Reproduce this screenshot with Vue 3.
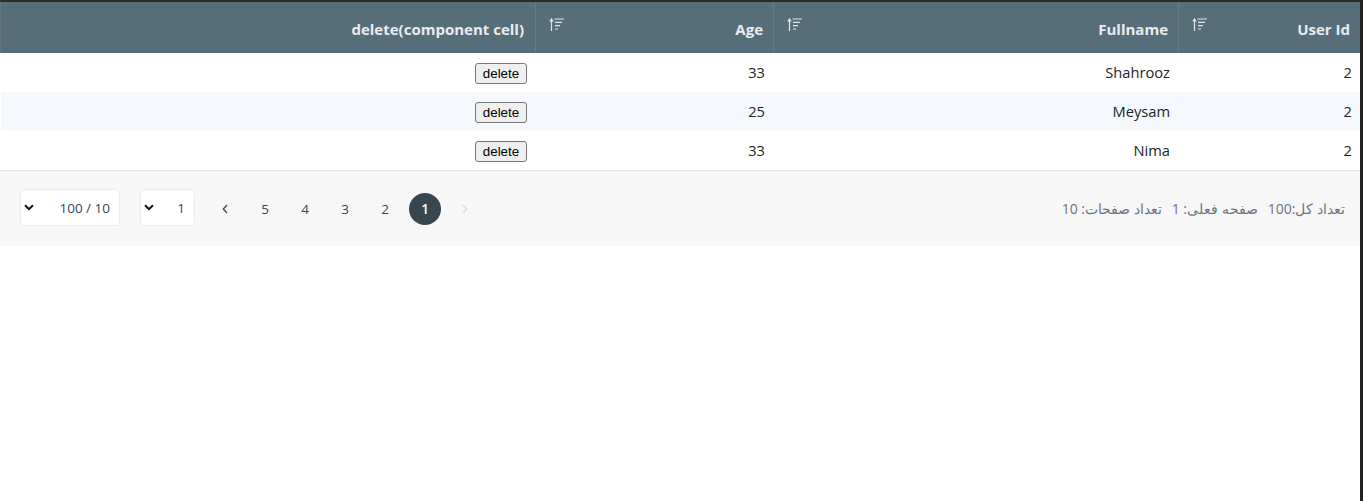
<script setup>
const rows = [
  { id: 2, name: 'Shahrooz', age: 33 },
  { id: 2, name: 'Meysam', age: 25 },
  { id: 2, name: 'Nima', age: 33 },
]
const pages = [5, 4, 3, 2]
</script>

<template>
  <div class="page">
    <div class="grid">
      <div class="head row-cols">
        <div class="th th-del"><span class="label">delete(component cell)</span></div>
        <div class="th th-age">
          <svg class="sort" width="16" height="13" viewBox="0 0 16 13"><path d="M2.500 1.500V13M.8 3.500 2.500 1 4.200 3.500" fill="none" stroke="currentColor" stroke-width="1.200"/><path d="M5.500 1h9.500M6 4.300h7M6 7.700h5M6 11h3" fill="none" stroke="currentColor" stroke-width="1.200"/></svg>
          <span class="label">Age</span>
        </div>
        <div class="th th-name">
          <svg class="sort" width="16" height="13" viewBox="0 0 16 13"><path d="M2.500 1.500V13M.8 3.500 2.500 1 4.200 3.500" fill="none" stroke="currentColor" stroke-width="1.200"/><path d="M5.500 1h9.500M6 4.300h7M6 7.700h5M6 11h3" fill="none" stroke="currentColor" stroke-width="1.200"/></svg>
          <span class="label">Fullname</span>
        </div>
        <div class="th th-id">
          <svg class="sort" width="16" height="13" viewBox="0 0 16 13"><path d="M2.500 1.500V13M.8 3.500 2.500 1 4.200 3.500" fill="none" stroke="currentColor" stroke-width="1.200"/><path d="M5.500 1h9.500M6 4.300h7M6 7.700h5M6 11h3" fill="none" stroke="currentColor" stroke-width="1.200"/></svg>
          <span class="label">User Id</span>
        </div>
      </div>
      <div v-for="(r, i) in rows" :key="i" class="tr row-cols" :class="{ alt: i === 1 }">
        <div class="td"><button class="del">delete</button></div>
        <div class="td">{{ r.age }}</div>
        <div class="td">{{ r.name }}</div>
        <div class="td td-last">{{ r.id }}</div>
      </div>
    </div>
    <div class="footer">
      <div class="controls">
        <div class="select sel-size">
          <svg class="chev" width="10" height="7" viewBox="0 0 10 7"><path d="M1 1.200 5 5.200 9 1.200" fill="none" stroke="#111" stroke-width="2"/></svg>
          <span>100 / 10</span>
        </div>
        <div class="select sel-page">
          <svg class="chev" width="10" height="7" viewBox="0 0 10 7"><path d="M1 1.200 5 5.200 9 1.200" fill="none" stroke="#111" stroke-width="2"/></svg>
          <span>1</span>
        </div>
        <div class="pager">
          <div class="pg"><svg width="8" height="10" viewBox="0 0 8 10"><path d="M6 1 2.300 5 6 9" fill="none" stroke="#38464f" stroke-width="1.300"/></svg></div>
          <div v-for="p in pages" :key="p" class="pg">{{ p }}</div>
          <div class="pg active">1</div>
          <div class="pg"><svg width="8" height="10" viewBox="0 0 8 10"><path d="M2 1 5.700 5 2 9" fill="none" stroke="#dcdcdc" stroke-width="1.300"/></svg></div>
        </div>
      </div>
      <div class="info" dir="rtl">
        <span>تعداد کل:100</span>
        <span>صفحه فعلی: 1</span>
        <span>تعداد صفحات: 10</span>
      </div>
    </div>
  </div>
</template>

<style scoped>
.page {
  font-family: "Open Sans", "Noto Sans", sans-serif;
  height: 100vh;
  background: #fff;
  border-top: 2px solid #2b2b2b;
  border-right: 3px solid #222;
  box-sizing: border-box;
}
.row-cols {
  display: grid;
  grid-template-columns: 535px 238px 405px 1fr;
}
.head {
  height: 51px;
  background: #566e7a;
  color: #e8ecee;
  font-weight: 700;
  font-size: 15px;
  border-left: 1px solid #61787f;
}
.th {
  display: flex;
  justify-content: space-between;
  align-items: flex-start;
  padding: 0 10px 0 13px;
  border-right: 1px solid #637b87;
  box-sizing: border-box;
  line-height: 20px;
}
.th-del { justify-content: flex-end; padding-right: 11px; }
.th-id { border-right: 0; }
.label { margin-top: 17px; }
.sort { margin-top: 16px; color: #dfe5e8; }
.tr { height: 39px; background: #fff; border-left: 1px solid #fff; }
.tr.alt { background: #f5f8fd; }
.td {
  display: flex;
  align-items: center;
  justify-content: flex-end;
  padding-right: 9px;
  padding-bottom: 2px;
  font-size: 14.7px;
  color: #212529;
}
.td-last { padding-right: 8px; }
.del {
  font: 13.333px "Liberation Sans", sans-serif;
  height: 21px;
  width: 52px;
  padding: 0;
  margin-top: 4px;
  background: #efefef;
  border: 1px solid #767676;
  border-radius: 3px;
  color: #000;
}
.footer {
  display: flex;
  justify-content: space-between;
  align-items: center;
  height: 76px;
  background: #f7f7f7;
  border-top: 1px solid #e0e0e0;
  box-sizing: border-box;
  padding: 0 15px 0 20px;
}
.controls { display: flex; align-items: center; }
.select {
  height: 37px;
  margin-top: -2px;
  display: flex;
  align-items: center;
  justify-content: space-between;
  background: #fff;
  border: 1px solid #ececec;
  border-radius: 5px;
  box-sizing: border-box;
  padding: 0 9px 0 3px;
  font-size: 13.5px;
  color: #38464f;
}
.sel-size { width: 100px; margin-right: 20px; }
.sel-page { width: 55px; margin-right: 14px; }
.pager { display: flex; align-items: center; gap: 8px; }
.pg {
  width: 32px;
  height: 32px;
  border-radius: 50%;
  display: flex;
  align-items: center;
  justify-content: center;
  font-size: 13.5px;
  color: #38464f;
}
.pg.active { background: #38474f; color: #fff; font-weight: 600; }
.info {
  display: flex;
  gap: 10px;
  font-size: 14px;
  color: #6b7480;
}
</style>
